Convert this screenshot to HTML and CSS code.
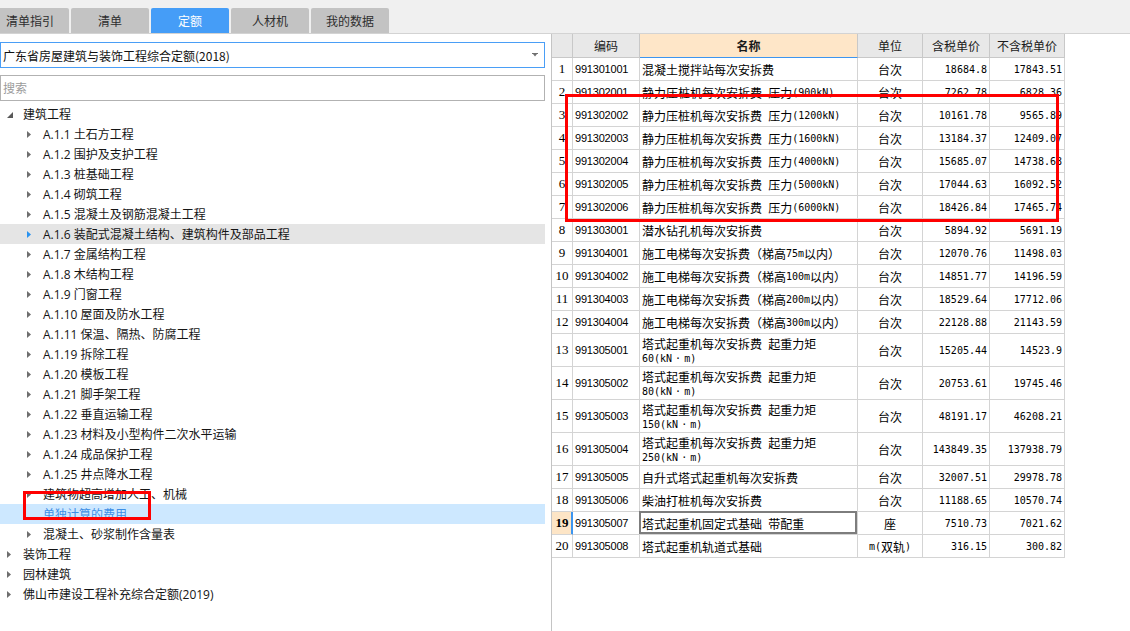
FILE: index.html
```html
<!DOCTYPE html>
<html lang="zh-CN">
<head>
<meta charset="utf-8">
<title>定额</title>
<link rel="stylesheet" href="styles.css">
</head>
<body>
<div class="topbar">
  <div class="tabs">
    <div class="tab">清单指引</div>
    <div class="tab">清单</div>
    <div class="tab active">定额</div>
    <div class="tab">人材机</div>
    <div class="tab">我的数据</div>
  </div>
</div>
<div class="main">
  <aside class="left">
    <div class="select">
      <span>广东省房屋建筑与装饰工程综合定额(2018)</span>
      <svg class="caret" width="6" height="4" viewBox="0 0 6 4"><path d="M0 0H6V1H5L3 3.5L1 1H0Z"/></svg>
    </div>
    <div class="search">搜索</div>
    <ul class="tree">
      <li class="node"><span class="tw open"><svg width="6" height="6" viewBox="0 0 6 6"><path d="M6 0V6H0Z"/></svg></span><span class="lbl">建筑工程</span></li>
      <li class="node l1"><span class="tw"><svg width="4" height="7" viewBox="0 0 4 7"><path d="M0 0L4 3.5L0 7Z"/></svg></span><span class="lbl">A.1.1 土石方工程</span></li>
      <li class="node l1"><span class="tw"><svg width="4" height="7" viewBox="0 0 4 7"><path d="M0 0L4 3.5L0 7Z"/></svg></span><span class="lbl">A.1.2 围护及支护工程</span></li>
      <li class="node l1"><span class="tw"><svg width="4" height="7" viewBox="0 0 4 7"><path d="M0 0L4 3.5L0 7Z"/></svg></span><span class="lbl">A.1.3 桩基础工程</span></li>
      <li class="node l1"><span class="tw"><svg width="4" height="7" viewBox="0 0 4 7"><path d="M0 0L4 3.5L0 7Z"/></svg></span><span class="lbl">A.1.4 砌筑工程</span></li>
      <li class="node l1"><span class="tw"><svg width="4" height="7" viewBox="0 0 4 7"><path d="M0 0L4 3.5L0 7Z"/></svg></span><span class="lbl">A.1.5 混凝土及钢筋混凝土工程</span></li>
      <li class="node l1 hover"><span class="tw"><svg width="4" height="7" viewBox="0 0 4 7"><path d="M0 0L4 3.5L0 7Z"/></svg></span><span class="lbl">A.1.6 装配式混凝土结构、建筑构件及部品工程</span></li>
      <li class="node l1"><span class="tw"><svg width="4" height="7" viewBox="0 0 4 7"><path d="M0 0L4 3.5L0 7Z"/></svg></span><span class="lbl">A.1.7 金属结构工程</span></li>
      <li class="node l1"><span class="tw"><svg width="4" height="7" viewBox="0 0 4 7"><path d="M0 0L4 3.5L0 7Z"/></svg></span><span class="lbl">A.1.8 木结构工程</span></li>
      <li class="node l1"><span class="tw"><svg width="4" height="7" viewBox="0 0 4 7"><path d="M0 0L4 3.5L0 7Z"/></svg></span><span class="lbl">A.1.9 门窗工程</span></li>
      <li class="node l1"><span class="tw"><svg width="4" height="7" viewBox="0 0 4 7"><path d="M0 0L4 3.5L0 7Z"/></svg></span><span class="lbl">A.1.10 屋面及防水工程</span></li>
      <li class="node l1"><span class="tw"><svg width="4" height="7" viewBox="0 0 4 7"><path d="M0 0L4 3.5L0 7Z"/></svg></span><span class="lbl">A.1.11 保温、隔热、防腐工程</span></li>
      <li class="node l1"><span class="tw"><svg width="4" height="7" viewBox="0 0 4 7"><path d="M0 0L4 3.5L0 7Z"/></svg></span><span class="lbl">A.1.19 拆除工程</span></li>
      <li class="node l1"><span class="tw"><svg width="4" height="7" viewBox="0 0 4 7"><path d="M0 0L4 3.5L0 7Z"/></svg></span><span class="lbl">A.1.20 模板工程</span></li>
      <li class="node l1"><span class="tw"><svg width="4" height="7" viewBox="0 0 4 7"><path d="M0 0L4 3.5L0 7Z"/></svg></span><span class="lbl">A.1.21 脚手架工程</span></li>
      <li class="node l1"><span class="tw"><svg width="4" height="7" viewBox="0 0 4 7"><path d="M0 0L4 3.5L0 7Z"/></svg></span><span class="lbl">A.1.22 垂直运输工程</span></li>
      <li class="node l1"><span class="tw"><svg width="4" height="7" viewBox="0 0 4 7"><path d="M0 0L4 3.5L0 7Z"/></svg></span><span class="lbl">A.1.23 材料及小型构件二次水平运输</span></li>
      <li class="node l1"><span class="tw"><svg width="4" height="7" viewBox="0 0 4 7"><path d="M0 0L4 3.5L0 7Z"/></svg></span><span class="lbl">A.1.24 成品保护工程</span></li>
      <li class="node l1"><span class="tw"><svg width="4" height="7" viewBox="0 0 4 7"><path d="M0 0L4 3.5L0 7Z"/></svg></span><span class="lbl">A.1.25 井点降水工程</span></li>
      <li class="node l1"><span class="tw"><svg width="4" height="7" viewBox="0 0 4 7"><path d="M0 0L4 3.5L0 7Z"/></svg></span><span class="lbl">建筑物超高增加人工、机械</span></li>
      <li class="node l1 selected"><span class="tw"></span><span class="lbl">单独计算的费用</span></li>
      <li class="node l1"><span class="tw"><svg width="4" height="7" viewBox="0 0 4 7"><path d="M0 0L4 3.5L0 7Z"/></svg></span><span class="lbl">混凝土、砂浆制作含量表</span></li>
      <li class="node"><span class="tw"><svg width="4" height="7" viewBox="0 0 4 7"><path d="M0 0L4 3.5L0 7Z"/></svg></span><span class="lbl">装饰工程</span></li>
      <li class="node"><span class="tw"><svg width="4" height="7" viewBox="0 0 4 7"><path d="M0 0L4 3.5L0 7Z"/></svg></span><span class="lbl">园林建筑</span></li>
      <li class="node"><span class="tw"><svg width="4" height="7" viewBox="0 0 4 7"><path d="M0 0L4 3.5L0 7Z"/></svg></span><span class="lbl">佛山市建设工程补充综合定额(2019)</span></li>
    </ul>
  </aside>
  <section class="right">
    <div class="grid">
      <div class="row head">
        <div class="n"></div><div>编码</div><div class="sort">名称</div><div>单位</div><div>含税单价</div><div>不含税单价</div>
      </div>
      <div class="row"><div class="n">1</div><div class="c">991301001</div><div class="nm">混凝土搅拌站每次安拆费</div><div class="u">台次</div><div class="p">18684.8</div><div class="p">17843.51</div></div>
      <div class="row"><div class="n">2</div><div class="c">991302001</div><div class="nm">静力压桩机每次安拆费 压力<span class="a">(900kN)</span></div><div class="u">台次</div><div class="p">7262.78</div><div class="p">6828.36</div></div>
      <div class="row"><div class="n">3</div><div class="c">991302002</div><div class="nm">静力压桩机每次安拆费 压力<span class="a">(1200kN)</span></div><div class="u">台次</div><div class="p">10161.78</div><div class="p">9565.89</div></div>
      <div class="row"><div class="n">4</div><div class="c">991302003</div><div class="nm">静力压桩机每次安拆费 压力<span class="a">(1600kN)</span></div><div class="u">台次</div><div class="p">13184.37</div><div class="p">12409.07</div></div>
      <div class="row"><div class="n">5</div><div class="c">991302004</div><div class="nm">静力压桩机每次安拆费 压力<span class="a">(4000kN)</span></div><div class="u">台次</div><div class="p">15685.07</div><div class="p">14738.68</div></div>
      <div class="row"><div class="n">6</div><div class="c">991302005</div><div class="nm">静力压桩机每次安拆费 压力<span class="a">(5000kN)</span></div><div class="u">台次</div><div class="p">17044.63</div><div class="p">16092.52</div></div>
      <div class="row"><div class="n">7</div><div class="c">991302006</div><div class="nm">静力压桩机每次安拆费 压力<span class="a">(6000kN)</span></div><div class="u">台次</div><div class="p">18426.84</div><div class="p">17465.74</div></div>
      <div class="row"><div class="n">8</div><div class="c">991303001</div><div class="nm">潜水钻孔机每次安拆费</div><div class="u">台次</div><div class="p">5894.92</div><div class="p">5691.19</div></div>
      <div class="row"><div class="n">9</div><div class="c">991304001</div><div class="nm">施工电梯每次安拆费（梯高<span class="a">75m</span>以内）</div><div class="u">台次</div><div class="p">12070.76</div><div class="p">11498.03</div></div>
      <div class="row"><div class="n">10</div><div class="c">991304002</div><div class="nm">施工电梯每次安拆费（梯高<span class="a">100m</span>以内）</div><div class="u">台次</div><div class="p">14851.77</div><div class="p">14196.59</div></div>
      <div class="row"><div class="n">11</div><div class="c">991304003</div><div class="nm">施工电梯每次安拆费（梯高<span class="a">200m</span>以内）</div><div class="u">台次</div><div class="p">18529.64</div><div class="p">17712.06</div></div>
      <div class="row"><div class="n">12</div><div class="c">991304004</div><div class="nm">施工电梯每次安拆费（梯高<span class="a">300m</span>以内）</div><div class="u">台次</div><div class="p">22128.88</div><div class="p">21143.59</div></div>
      <div class="row tall"><div class="n">13</div><div class="c">991305001</div><div class="nm"><span class="lines">塔式起重机每次安拆费 起重力矩<br><span class="a">60(kN<span class="dot">·</span>m)</span></span></div><div class="u">台次</div><div class="p">15205.44</div><div class="p">14523.9</div></div>
      <div class="row tall"><div class="n">14</div><div class="c">991305002</div><div class="nm"><span class="lines">塔式起重机每次安拆费 起重力矩<br><span class="a">80(kN<span class="dot">·</span>m)</span></span></div><div class="u">台次</div><div class="p">20753.61</div><div class="p">19745.46</div></div>
      <div class="row tall"><div class="n">15</div><div class="c">991305003</div><div class="nm"><span class="lines">塔式起重机每次安拆费 起重力矩<br><span class="a">150(kN<span class="dot">·</span>m)</span></span></div><div class="u">台次</div><div class="p">48191.17</div><div class="p">46208.21</div></div>
      <div class="row tall"><div class="n">16</div><div class="c">991305004</div><div class="nm"><span class="lines">塔式起重机每次安拆费 起重力矩<br><span class="a">250(kN<span class="dot">·</span>m)</span></span></div><div class="u">台次</div><div class="p">143849.35</div><div class="p">137938.79</div></div>
      <div class="row"><div class="n">17</div><div class="c">991305005</div><div class="nm">自升式塔式起重机每次安拆费</div><div class="u">台次</div><div class="p">32007.51</div><div class="p">29978.78</div></div>
      <div class="row"><div class="n">18</div><div class="c">991305006</div><div class="nm">柴油打桩机每次安拆费</div><div class="u">台次</div><div class="p">11188.65</div><div class="p">10570.74</div></div>
      <div class="row current"><div class="n">19</div><div class="c">991305007</div><div class="nm focus">塔式起重机固定式基础 带配重</div><div class="u">座</div><div class="p">7510.73</div><div class="p">7021.62</div></div>
      <div class="row"><div class="n">20</div><div class="c">991305008</div><div class="nm">塔式起重机轨道式基础</div><div class="u"><span class="a">m(</span>双轨<span class="a">)</span></div><div class="p">316.15</div><div class="p">300.82</div></div>
    </div>
  </section>
</div>
<div class="mark mark-table"></div>
<div class="mark mark-tree"></div>
</body>
</html>
```
FILE: styles.css
```css
html, body {
  margin: 0;
  padding: 0;
}
body {
  width: 1130px;
  height: 631px;
  overflow: hidden;
  position: relative;
  background: #ffffff;
  color: #1a1a1a;
  font-family: "Noto Sans CJK SC", sans-serif;
  font-size: 12px;
}

/* ---------- top tab bar ---------- */
.topbar {
  height: 33px;
  background: #f0f0f0;
  border-bottom: 1px solid #d3d3d3;
  display: flex;
  align-items: flex-end;
  overflow: hidden;
}
.tabs {
  display: flex;
  gap: 2px;
  margin-left: -9px;
}
.tab {
  width: 78px;
  height: 25px;
  line-height: 25px;
  text-align: center;
  background: #c3c3c3;
  color: #2e2e2e;
  font-size: 12px;
  border-radius: 2px 2px 0 0;
}
.tab.active {
  background: #459df7;
  color: #ffffff;
}

/* ---------- main split ---------- */
.main {
  display: flex;
  height: 597px;
}
.left {
  width: 551px;
  flex: none;
  padding-top: 8px;
  box-sizing: border-box;
}
.select {
  width: 545px;
  height: 26px;
  box-sizing: border-box;
  border: 1px solid #4a9ef6;
  display: flex;
  align-items: center;
  justify-content: space-between;
  padding: 0 6px 0 2px;
  color: #111;
}
.caret {
  fill: #707070;
}
.search {
  margin-top: 7px;
  width: 545px;
  height: 26px;
  box-sizing: border-box;
  border: 1px solid #b2b2b2;
  color: #9b9b9b;
  line-height: 24px;
  padding-left: 2px;
}

/* ---------- tree ---------- */
.tree {
  list-style: none;
  margin: 3px 0 0;
  padding: 0;
  width: 545px;
}
.node {
  height: 20px;
  display: flex;
  align-items: center;
  white-space: nowrap;
  font-family: "Open Sans", "Noto Sans CJK SC", sans-serif;
  font-size: 12px;
  line-height: 20px;
  color: #151515;
}
.node.l1 {
  padding-left: 20px;
}
.tw {
  width: 20px;
  height: 20px;
  flex: none;
  display: flex;
  align-items: center;
  padding-left: 7px;
  box-sizing: border-box;
  fill: #6e6e6e;
}
.tw.open {
  fill: #595959;
  padding-top: 2px;
}
.lbl {
  margin-left: 3px;
  padding-top: 1px;
}
.node.hover {
  background: #e5e5e5;
}
.node.hover .tw {
  fill: #2a93f0;
}
.node.selected {
  background: #cde8ff;
}
.node.selected .lbl {
  color: #3d8fe6;
}

/* ---------- grid ---------- */
.right {
  flex: 1;
  border-left: 1px solid #c4c4c4;
  background: #fff;
}
.grid {
  width: 513px;
}
.row {
  display: grid;
  grid-template-columns: 21px 67px 218px 65px 67px 75px;
  height: 23px;
}
.row > div {
  box-sizing: border-box;
  border-right: 1px solid #d4d4d4;
  border-bottom: 1px solid #d4d4d4;
  display: flex;
  align-items: center;
  white-space: nowrap;
  color: #000;
}
.row.tall {
  height: 33px;
}
.row.head {
  height: 24px;
  background: #e8e8e8;
}
.row.head > div {
  justify-content: center;
  border-color: #c8c8c8;
  color: #1a1a1a;
}
.row.head > .sort {
  background: #fee6c8;
  font-weight: bold;
  border-bottom-color: #3d95ef;
}
.n {
  justify-content: center;
  font-family: "Liberation Serif", serif;
  font-size: 13px;
}
.c {
  padding-left: 2px;
  font-family: "Liberation Sans", sans-serif;
  font-size: 11px;
  letter-spacing: -0.2px;
}
.nm {
  padding-left: 2px;
  word-spacing: 3.5px;
}
.lines {
  display: block;
  line-height: 13px;
  padding-top: 1px;
}
.u {
  justify-content: center;
}
.p {
  justify-content: flex-end;
  padding-right: 2px;
  font-family: "DejaVu Sans Mono", monospace;
  font-size: 10px;
}
.a {
  font-family: "DejaVu Sans Mono", monospace;
  font-size: 10px;
  word-spacing: 0;
}
.dot {
  padding: 0 3px;
}
.row.current .n {
  background: #fde5c6;
  font-weight: bold;
  border-right-color: #3c95f0;
  box-shadow: inset -1px 0 0 #3c95f0;
}
.nm.focus {
  position: relative;
}
.nm.focus::after {
  content: "";
  position: absolute;
  left: -1px;
  top: -1px;
  right: 0;
  bottom: 0;
  border: 2px solid #7d7d7d;
}

/* ---------- red annotation boxes ---------- */
.mark {
  position: absolute;
  box-sizing: border-box;
  border: 3px solid #ff0000;
}
.mark-table {
  left: 565px;
  top: 94px;
  width: 494px;
  height: 128px;
}
.mark-tree {
  left: 23px;
  top: 491px;
  width: 128px;
  height: 29px;
}
```
